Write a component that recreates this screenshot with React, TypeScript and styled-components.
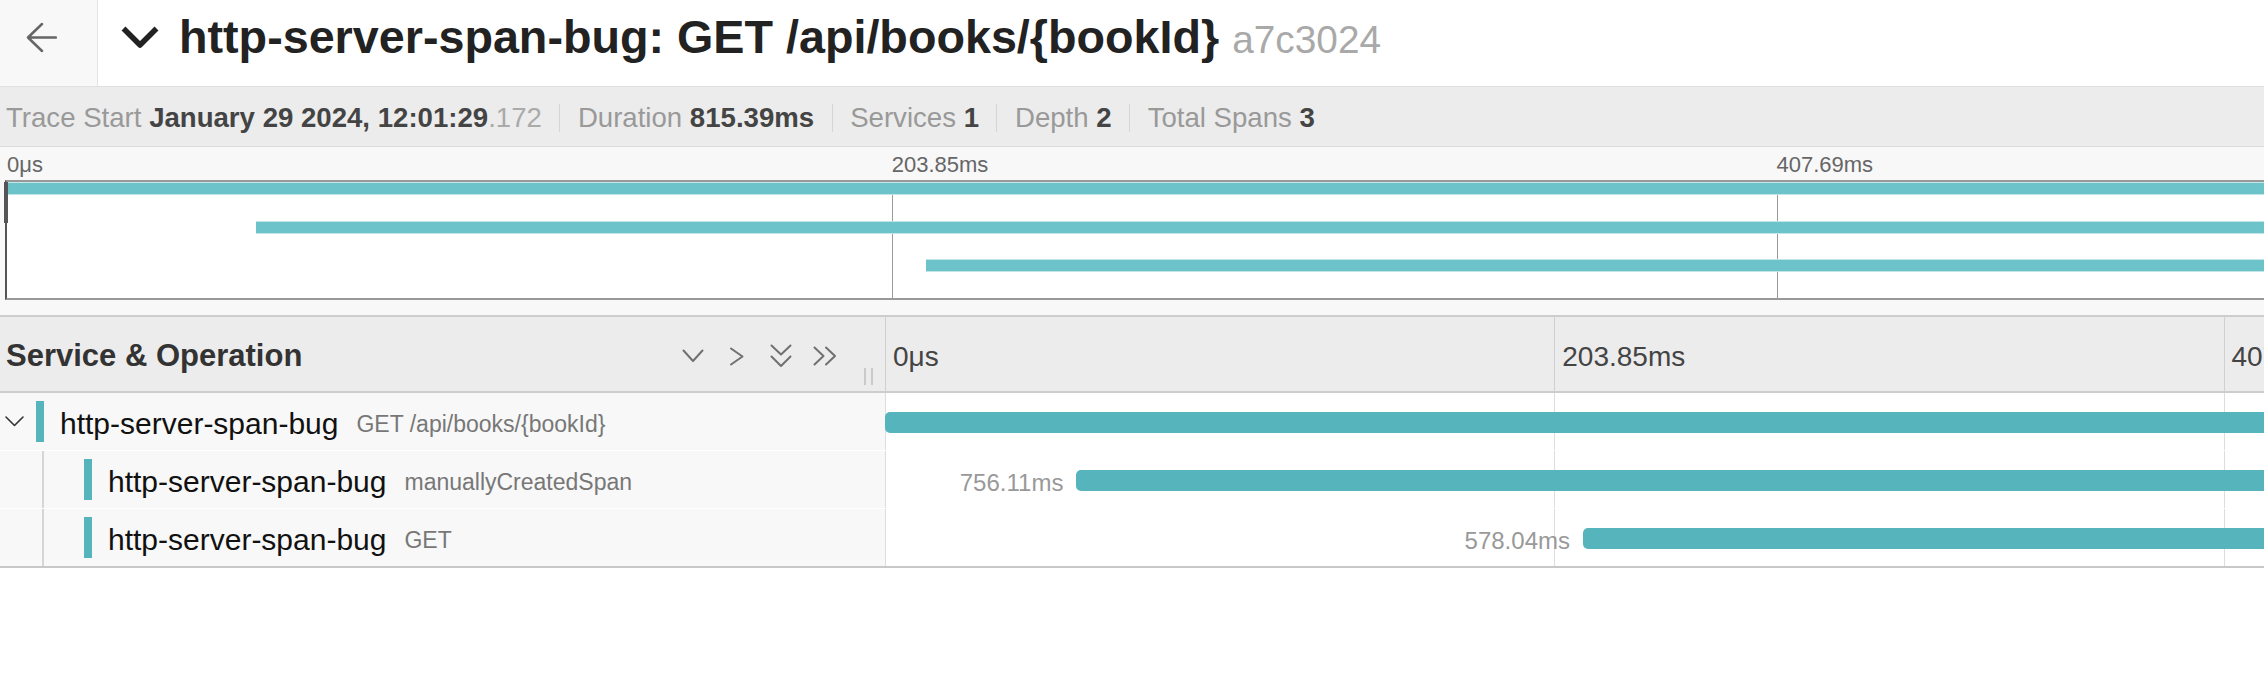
import React from "react";
import styled, { createGlobalStyle } from "styled-components";

type Span = {
  id: string;
  service: string;
  operation: string;
  start: number;
  duration: number;
  depth: number;
  hasChildren?: boolean;
};

const TOTAL = 815.39;
const PAGE_WIDTH = 3562;
const NAME_COL = 885;

const SPANS: Span[] = [
  { id: "a", service: "http-server-span-bug", operation: "GET /api/books/{bookId}", start: 0, duration: 815.39, depth: 0, hasChildren: true },
  { id: "b", service: "http-server-span-bug", operation: "manuallyCreatedSpan", start: 58.3, duration: 756.11, depth: 1 },
  { id: "c", service: "http-server-span-bug", operation: "GET", start: 212.6, duration: 578.04, depth: 1 },
];

const TICKS = [
  { pct: 0, label: "0μs" },
  { pct: 25, label: "203.85ms" },
  { pct: 50, label: "407.69ms" },
  { pct: 75, label: "611.54ms" },
];

const pct = (v: number) => `${(v / TOTAL) * 100}%`;

const GlobalStyle = createGlobalStyle`
  html, body {
    margin: 0;
    padding: 0;
    overflow: hidden;
    background: #ffffff;
  }
  body {
    font-family: "Liberation Sans", Arial, Helvetica, sans-serif;
  }
  * { box-sizing: border-box; }
`;

const Page = styled.div`
  width: ${PAGE_WIDTH}px;
  display: flex;
  flex-direction: column;
  color: #222;
`;

/* ---------- icons ---------- */
const Icon = styled.svg<{ $color?: string; $stroke?: number; $cap?: string }>`
  display: block;
  flex: none;
  fill: none;
  stroke: ${(p) => p.$color ?? "#707070"};
  stroke-width: ${(p) => p.$stroke ?? 2};
  stroke-linecap: ${(p) => p.$cap ?? "round"};
  stroke-linejoin: round;
`;

/* ---------- top bar ---------- */
const TopBar = styled.header`
  display: flex;
  height: 86px;
  background: #fff;
`;

const BackButton = styled.button`
  flex: none;
  width: 98px;
  height: 100%;
  display: flex;
  align-items: center;
  padding: 0 0 12px 26px;
  margin: 0;
  background: #f8f8f8;
  border: none;
  border-right: 1px solid #e4e4e4;
  cursor: pointer;
`;

const TitleArea = styled.div`
  display: flex;
  align-items: center;
  gap: 20px;
  padding: 0 0 11px 23px;
`;

const Title = styled.h1`
  margin: 0;
  font-size: 46.7px;
  line-height: 1;
  font-weight: 700;
  color: #222;
  white-space: nowrap;
`;

const TraceId = styled.span`
  margin-left: 13px;
  font-size: 38.8px;
  font-weight: 400;
  color: #a9a9a9;
`;

/* ---------- stats ---------- */
const StatsBar = styled.div`
  display: flex;
  align-items: center;
  height: 61px;
  padding: 2px 0 0 6px;
  background: #ececec;
  border-top: 1px solid #e0e0e0;
  border-bottom: 1px solid #dcdcdc;
  font-size: 27.6px;
  white-space: nowrap;
`;

const Stat = styled.span`
  color: #999;
`;

const StatValue = styled.strong`
  color: #444;
  font-weight: 700;
`;

const StatFraction = styled.span`
  color: #aaa;
  font-weight: 400;
`;

const StatDivider = styled.span`
  width: 1px;
  height: 28px;
  margin: 0 17.5px;
  background: #d6d6d6;
`;

/* ---------- minimap ---------- */
const MinimapSection = styled.section`
  background: #f8f8f8;
  padding: 0 16px 15px 5px;
`;

const MinimapTicks = styled.div`
  position: relative;
  height: 33px;
  margin-left: 2px;
`;

const MinimapTickLabel = styled.span`
  position: absolute;
  top: 0;
  line-height: 36px;
  font-size: 22px;
  color: #666;
  white-space: nowrap;
`;

const MinimapCanvas = styled.div`
  position: relative;
  display: flex;
  flex-direction: column;
  background: #fff;
  border-top: 2px solid #999;
  border-bottom: 2px solid #999;
  border-left: 2px solid #555;
`;

const MinimapTickLine = styled.span`
  position: absolute;
  top: 0;
  bottom: 0;
  width: 1px;
  background: #9a9a9a;
`;

const MinimapHandle = styled.span`
  position: absolute;
  left: -3px;
  top: 0;
  width: 4px;
  height: 41px;
  background: #555;
`;

const MinimapRow = styled.div`
  position: relative;
  height: 38.67px;
`;

const MinimapBar = styled.span`
  position: absolute;
  top: 0;
  height: 13px;
  background: #6cc3c9;
  border-top: 1px solid #c2e5e8;
  border-bottom: 1px solid #c2e5e8;
`;

/* ---------- detail ---------- */
const DetailSection = styled.section`
  border-top: 2px solid #cdcdcd;
  border-bottom: 2px solid #c8c8c8;
`;

const DetailHeader = styled.div`
  display: grid;
  grid-template-columns: ${NAME_COL}px 1fr;
  height: 76px;
  background: #ececec;
  border-bottom: 2px solid #cdcdcd;
`;

const NameHeader = styled.div`
  position: relative;
  display: flex;
  align-items: center;
  padding: 5px 38px 0 6px;
`;

const HeaderTitle = styled.h3`
  margin: 0;
  font-size: 31px;
  font-weight: 700;
  color: #333;
  white-space: nowrap;
`;

const HeaderTools = styled.div`
  display: flex;
  margin-left: auto;
`;

const ToolButton = styled.button`
  width: 44px;
  height: 30px;
  display: flex;
  align-items: center;
  justify-content: center;
  padding: 0;
  border: none;
  background: transparent;
  cursor: pointer;
`;

const Resizer = styled.span`
  position: absolute;
  right: 12px;
  bottom: 6px;
  width: 9px;
  height: 17px;
  border-left: 2px solid #cacaca;
  border-right: 2px solid #cacaca;
`;

const TimelineHeader = styled.div`
  position: relative;
  overflow: hidden;
`;

const TickLine = styled.span<{ $color: string }>`
  position: absolute;
  top: 0;
  bottom: 0;
  width: 1px;
  background: ${(p) => p.$color};
`;

const TimelineTickLabel = styled.span`
  position: absolute;
  top: 0;
  bottom: 0;
  display: flex;
  align-items: center;
  padding: 6px 0 0 8px;
  font-size: 28px;
  color: #444;
  white-space: nowrap;
`;

const SpanRow = styled.div`
  display: grid;
  grid-template-columns: ${NAME_COL}px 1fr;
  height: 58px;
  border-bottom: 1px solid #fff;
  &:last-child {
    height: 57px;
    border-bottom: none;
  }
`;

const NameCell = styled.div`
  display: flex;
  align-items: center;
  background: #f8f8f8;
  white-space: nowrap;
`;

const Toggle = styled.span`
  flex: none;
  width: 36px;
  display: flex;
  align-items: center;
  padding-left: 5px;
`;

const IndentGuide = styled.span`
  flex: none;
  align-self: stretch;
  width: 44px;
  margin-right: 40px;
  border-right: 2px solid #d6d6d6;
`;

const ServiceColor = styled.span`
  flex: none;
  width: 8px;
  height: 41px;
  background: #56b5bc;
`;

const ServiceName = styled.span`
  margin-left: 16px;
  padding-top: 5px;
  font-size: 30px;
  color: #111;
`;

const OperationName = styled.span`
  margin-left: 18px;
  padding-top: 6px;
  font-size: 23px;
  color: #777;
`;

const TimelineCell = styled.div`
  position: relative;
  background: #fff;
`;

const SpanBar = styled.span`
  position: absolute;
  top: 19px;
  height: 21px;
  border-radius: 5px;
  background: #56b5bc;
`;

const DurationLabel = styled.span`
  position: absolute;
  right: calc(100% + 13px);
  top: 2px;
  line-height: 21px;
  font-size: 24px;
  color: #999;
  white-space: nowrap;
`;

export default function App() {
  return (
    <Page>
      <GlobalStyle />
      <TopBar>
        <BackButton aria-label="Back">
          <Icon $color="#666" $stroke={2.5} width={31} height={31} viewBox="0 0 31 31">
            <path d="M16 2 L2 15.5 L16 29 M2 15.5 H30" />
          </Icon>
        </BackButton>
        <TitleArea>
          <Icon $color="#222" $stroke={5.5} $cap="butt" width={38} height={23} viewBox="0 0 38 23">
            <polyline points="2.5,2.5 19,19 35.5,2.5" />
          </Icon>
          <Title>
            http-server-span-bug: GET /api/books/{"{bookId}"}
            <TraceId>a7c3024</TraceId>
          </Title>
        </TitleArea>
      </TopBar>

      <StatsBar>
        <Stat>
          Trace Start{" "}
          <StatValue>
            January 29 2024, 12:01:29<StatFraction>.172</StatFraction>
          </StatValue>
        </Stat>
        <StatDivider />
        <Stat>
          Duration <StatValue>815.39ms</StatValue>
        </Stat>
        <StatDivider />
        <Stat>
          Services <StatValue>1</StatValue>
        </Stat>
        <StatDivider />
        <Stat>
          Depth <StatValue>2</StatValue>
        </Stat>
        <StatDivider />
        <Stat>
          Total Spans <StatValue>3</StatValue>
        </Stat>
      </StatsBar>

      <MinimapSection>
        <MinimapTicks>
          {TICKS.map((t) => (
            <MinimapTickLabel key={t.label} style={{ left: `${t.pct}%` }}>
              {t.label}
            </MinimapTickLabel>
          ))}
        </MinimapTicks>
        <MinimapCanvas>
          {TICKS.filter((t) => t.pct > 0).map((t) => (
            <MinimapTickLine key={t.label} style={{ left: `${t.pct}%` }} />
          ))}
          {SPANS.map((s) => (
            <MinimapRow key={s.id}>
              <MinimapBar
                style={{
                  left: s.start > 0 ? `calc(${pct(s.start)} - 4px)` : 0,
                  width: pct(s.duration),
                }}
              />
            </MinimapRow>
          ))}
          <MinimapHandle />
        </MinimapCanvas>
      </MinimapSection>

      <DetailSection>
        <DetailHeader>
          <NameHeader>
            <HeaderTitle>Service &amp; Operation</HeaderTitle>
            <HeaderTools>
              <ToolButton aria-label="Collapse one">
                <Icon width={22} height={14} viewBox="0 0 22 14">
                  <polyline points="1.5,1.5 11,12 20.5,1.5" />
                </Icon>
              </ToolButton>
              <ToolButton aria-label="Expand one">
                <Icon width={16} height={19} viewBox="0 0 16 19">
                  <polyline points="2,1.5 13.5,9.5 2,17.5" />
                </Icon>
              </ToolButton>
              <ToolButton aria-label="Expand all">
                <Icon width={22} height={24} viewBox="0 0 22 24">
                  <polyline points="1.5,1.5 11,10.5 20.5,1.5" />
                  <polyline points="1.5,12.5 11,22 20.5,12.5" />
                </Icon>
              </ToolButton>
              <ToolButton aria-label="Collapse all">
                <Icon width={25} height={20} viewBox="0 0 25 20">
                  <polyline points="1.5,1.5 10.5,10 1.5,18.5" />
                  <polyline points="13,1.5 22,10 13,18.5" />
                </Icon>
              </ToolButton>
            </HeaderTools>
            <Resizer />
          </NameHeader>
          <TimelineHeader>
            {TICKS.map((t) => (
              <React.Fragment key={t.label}>
                <TickLine $color="#d0d0d0" style={{ left: `${t.pct}%` }} />
                <TimelineTickLabel style={{ left: `${t.pct}%` }}>{t.label}</TimelineTickLabel>
              </React.Fragment>
            ))}
          </TimelineHeader>
        </DetailHeader>

        {SPANS.map((s) => (
          <SpanRow key={s.id}>
            <NameCell>
              {s.depth === 0 ? (
                <Toggle>
                  <Icon $color="#333" $stroke={1.6} width={19} height={11} viewBox="0 0 19 11">
                    <polyline points="1,1 9.5,9.5 18,1" />
                  </Icon>
                </Toggle>
              ) : (
                <IndentGuide />
              )}
              <ServiceColor />
              <ServiceName>{s.service}</ServiceName>
              <OperationName>{s.operation}</OperationName>
            </NameCell>
            <TimelineCell>
              {TICKS.map((t) => (
                <TickLine key={t.label} $color="#dddddd" style={{ left: `${t.pct}%` }} />
              ))}
              <SpanBar style={{ left: pct(s.start), width: pct(s.duration) }}>
                {s.start > 0 && <DurationLabel>{`${s.duration.toFixed(2)}ms`}</DurationLabel>}
              </SpanBar>
            </TimelineCell>
          </SpanRow>
        ))}
      </DetailSection>
    </Page>
  );
}
